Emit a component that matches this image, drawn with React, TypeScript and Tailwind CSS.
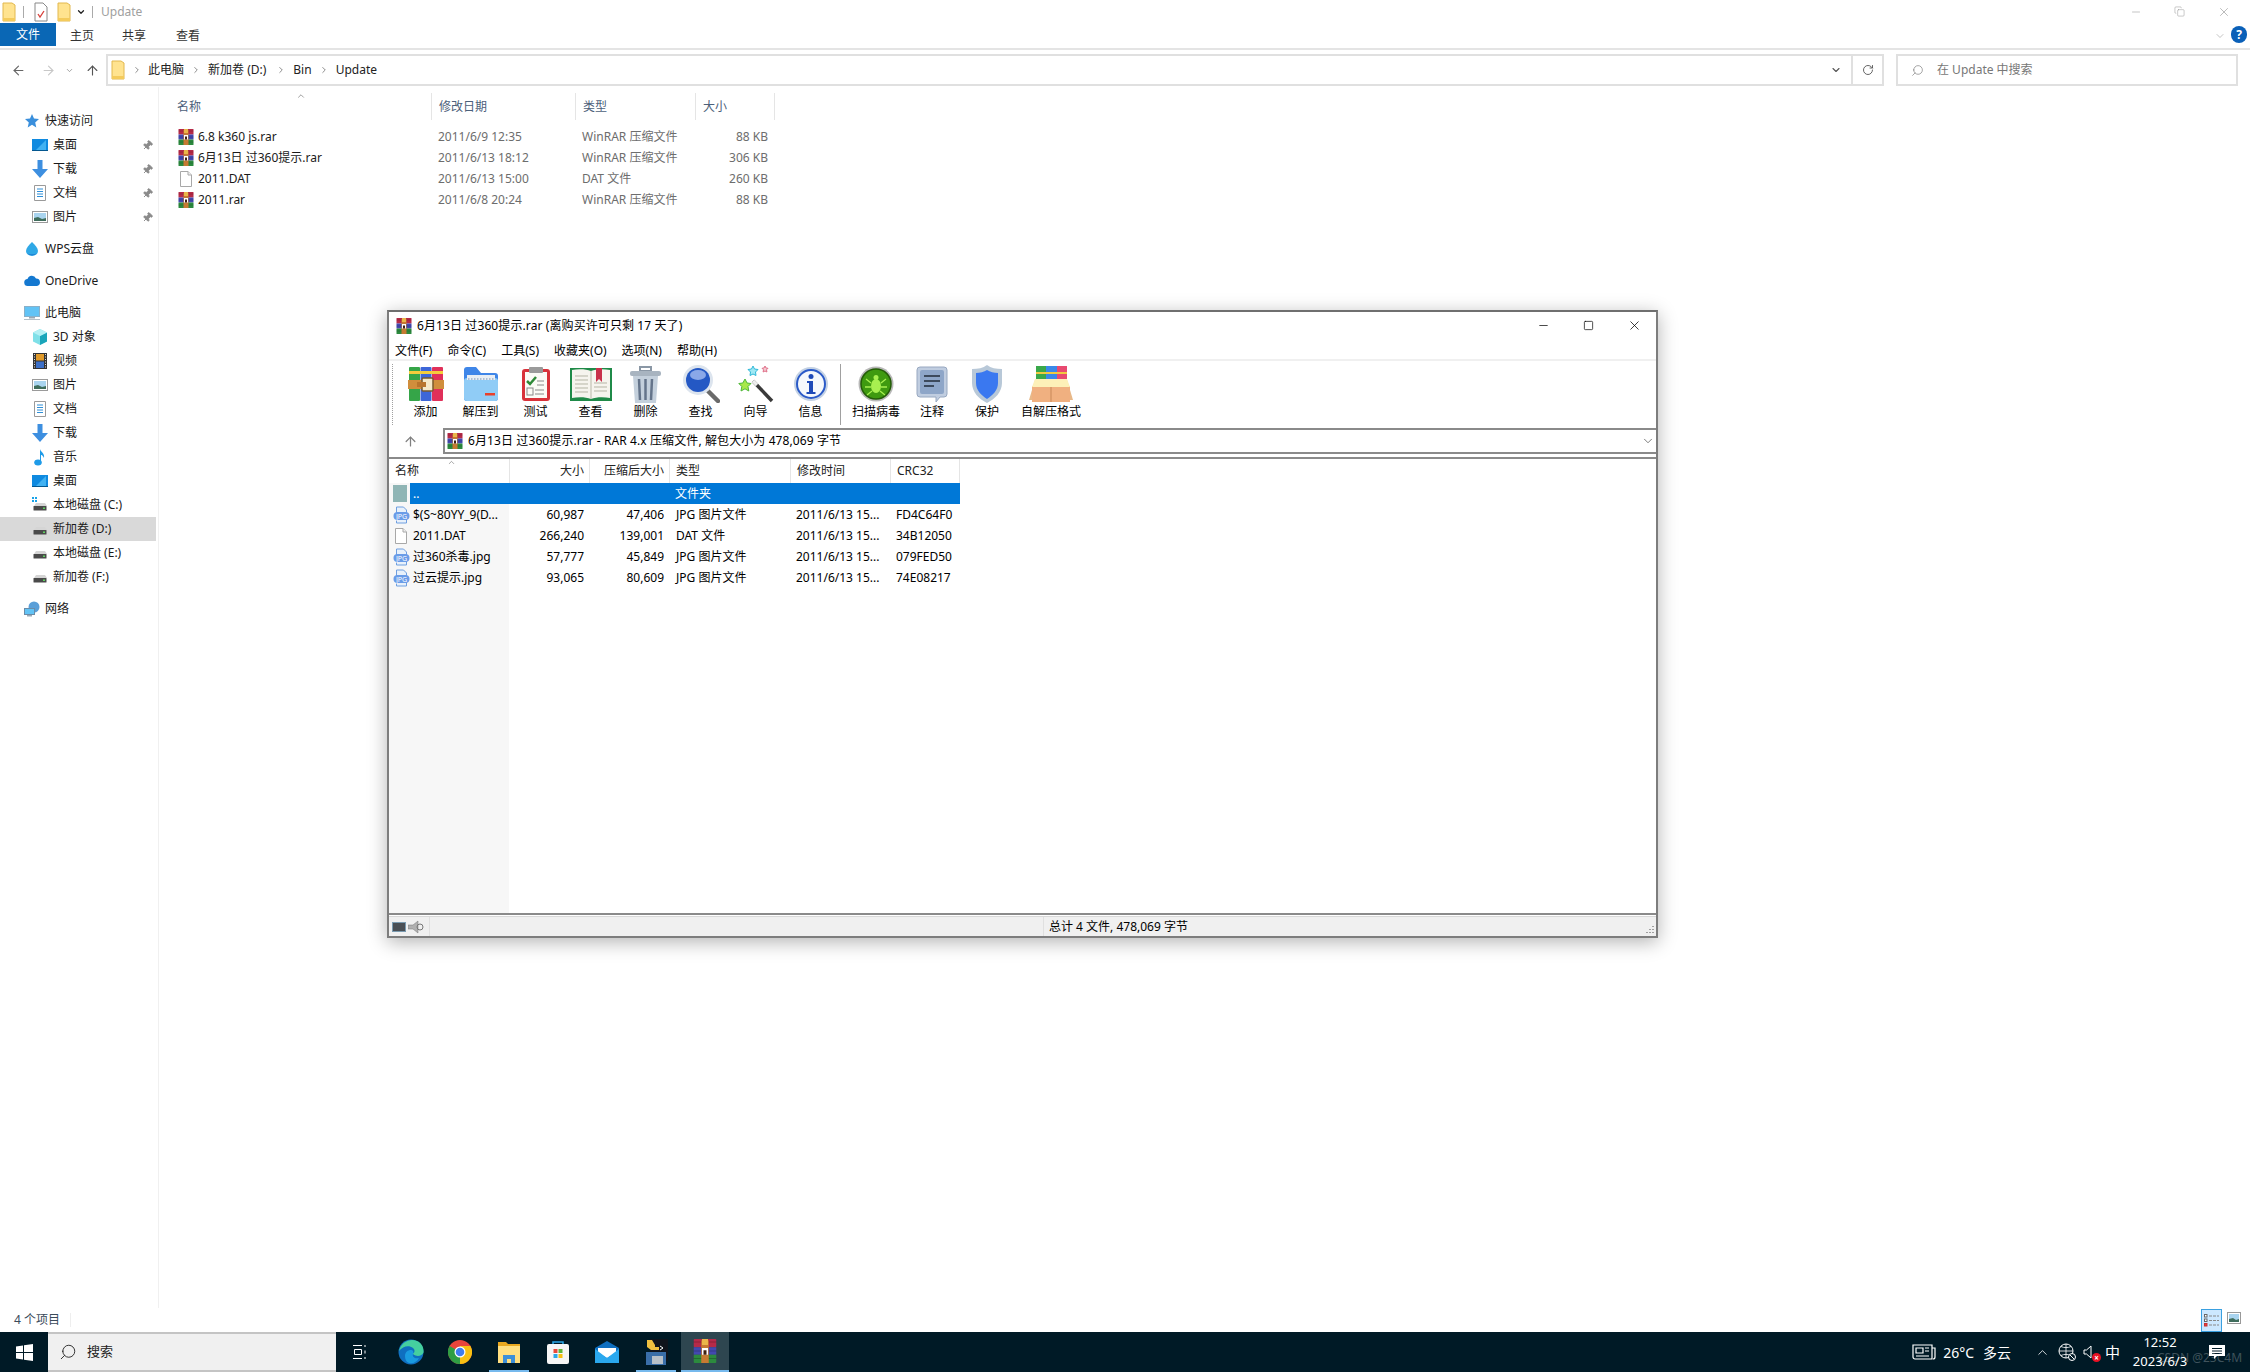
import { ArrowUp, ArrowLeft, ArrowRight, ChevronDown, ChevronUp, ChevronRight, RotateCw, Search, Minus, Square, X, Copy, Pin } from 'lucide-react'

const font = { fontFamily: '"Noto Sans", "Noto Sans CJK SC", sans-serif' }

function RarIcon({ size = 16 }: { size?: number }) {
  return (
    <svg width={size} height={size} viewBox="0 0 16 16" className="shrink-0">
      <rect x="0.500" y="0" width="15" height="5.500" rx="0.500" fill="#b52a48" />
      <rect x="0.500" y="5.500" width="15" height="5" fill="#4348b0" />
      <rect x="0.500" y="10.500" width="15" height="5.500" rx="0.500" fill="#2c8a3e" />
      <path d="M0.500 2h15M0.500 8h15M0.500 13h15" stroke="#000" strokeOpacity="0.25" strokeWidth="0.600" />
      <rect x="5.500" y="1" width="5" height="15" fill="#c67a32" />
      <rect x="6" y="0" width="4" height="4" fill="#eab64a" />
      <rect x="6" y="6" width="4" height="4.500" fill="#fff" />
      <rect x="7" y="7.500" width="2" height="3" fill="#402010" />
    </svg>
  )
}

function FileIcon() {
  return (
    <svg width="16" height="16" viewBox="0 0 16 16" className="shrink-0">
      <path d="M2.500.5h7.500l3.500 3.500v11.500h-11z" fill="#fff" stroke="#a8a8a8" />
      <path d="M10 .5v3.500h3.500" fill="#f0f0f0" stroke="#a8a8a8" />
    </svg>
  )
}

function JpgIcon() {
  return (
    <svg width="17" height="18" viewBox="0 0 17 18" className="shrink-0">
      <path d="M3.500 1h7l3 3v13h-10z" fill="#e8f1fb" stroke="#6f9fe0" />
      <rect x="0.500" y="6" width="16" height="8" rx="4" fill="#6a9ce8" />
      <text x="8.500" y="12.500" textAnchor="middle" fontSize="7" fill="#fff" style={font}>JPG</text>
    </svg>
  )
}

function FolderIcon({ className = '' }: { className?: string }) {
  return (
    <svg width="14" height="20" viewBox="0 0 14 20" className={className}>
      <path d="M1 1h9l3 2v16H1z" fill="#ffe38f" stroke="#e2b84e" />
      <rect x="1" y="16" width="12" height="3" fill="#f4cb5c" />
    </svg>
  )
}

function DriveIcon({ win = false }: { win?: boolean }) {
  return (
    <svg width="16" height="16" viewBox="0 0 16 16">
      {win && (
        <g fill="#19a3e8">
          <rect x="0" y="0" width="2" height="2" />
          <rect x="3" y="0" width="2" height="2" />
          <rect x="0" y="3" width="2" height="2" />
          <rect x="3" y="3" width="2" height="2" />
        </g>
      )}
      <path d="M2 9 4 6h9l2 3z" fill="#d5d5d5" />
      <rect x="1.500" y="9" width="13" height="4.500" rx="0.500" fill="#4a4a4a" />
      <rect x="11" y="10.500" width="2" height="1.500" fill="#5fd35f" />
    </svg>
  )
}

function NavIcon({ kind }: { kind: string }) {
  switch (kind) {
    case 'star':
      return (
        <svg width="16" height="16" viewBox="0 0 16 16">
          <path d="M8 1l2 4.600 5 .5-3.800 3.300 1.100 5L8 11.800l-4.300 2.600 1.100-5L1 6.100l5-.5z" fill="#3a8fdc" />
        </svg>
      )
    case 'desktop':
      return (
        <svg width="16" height="16" viewBox="0 0 16 16">
          <rect x="0" y="2" width="16" height="12" fill="#0f8ae0" />
          <path d="M14 3 4 13h10z" fill="#42b2f2" />
          <rect x="0" y="13" width="16" height="1" fill="#04578f" />
        </svg>
      )
    case 'download':
      return (
        <svg width="16" height="18" viewBox="0 0 16 18">
          <path d="M5.500 0h5v9H16l-8 9-8-9h5.500z" fill="#3d8fe0" />
        </svg>
      )
    case 'doc':
      return (
        <svg width="16" height="16" viewBox="0 0 16 16">
          <path d="M2.500.5h11v15h-11z" fill="#fff" stroke="#9a9a9a" />
          <path d="M5 4h6M5 6.500h6M5 9h6M5 11.500h6" stroke="#2f8fd8" />
        </svg>
      )
    case 'picture':
      return (
        <svg width="16" height="16" viewBox="0 0 16 16">
          <rect x="0.500" y="2.500" width="15" height="11" fill="#fff" stroke="#9a9a9a" />
          <rect x="2" y="4" width="12" height="8" fill="#a9d4ef" />
          <path d="M2 12V9l4-1 4 2 4-1v3z" fill="#3f6d5c" />
        </svg>
      )
    case 'wps':
      return (
        <svg width="16" height="16" viewBox="0 0 16 16">
          <path d="M8 1c3 3 6 6 6 9a6 5 0 0 1-12 0c0-3 3-6 6-9z" fill="#2fa8e6" />
          <path d="M3 12c3 2 7 2 10 0a6 5 0 0 1-10 0z" fill="#1668c8" />
        </svg>
      )
    case 'cloud':
      return (
        <svg width="16" height="16" viewBox="0 0 16 16">
          <path d="M4 13a3.500 3.500 0 0 1-.5-7A4.500 4.500 0 0 1 12 5.500a3.800 3.800 0 0 1 1 7.500z" fill="#1478d0" />
        </svg>
      )
    case 'pc':
      return (
        <svg width="16" height="16" viewBox="0 0 16 16">
          <rect x="0.500" y="1.500" width="15" height="10" fill="#62c3f5" stroke="#8ab0c8" />
          <rect x="5" y="12" width="6" height="1.500" fill="#9aa9b5" />
          <rect x="0" y="14" width="16" height="1" fill="#b5c0c8" />
        </svg>
      )
    case '3d':
      return (
        <svg width="16" height="16" viewBox="0 0 16 16">
          <path d="M8 0l7 3.500v9L8 16l-7-3.500v-9z" fill="#7fe0e8" />
          <path d="M8 7l7-3.500v9L8 16z" fill="#1aa5ba" />
          <path d="M8 0l7 3.500L8 7 1 3.500z" fill="#b5f0f4" />
        </svg>
      )
    case 'video':
      return (
        <svg width="16" height="16" viewBox="0 0 16 16">
          <rect x="1" y="0" width="14" height="16" fill="#333" />
          <rect x="4" y="1" width="8" height="6.500" fill="#e09a2a" />
          <rect x="4" y="8.500" width="8" height="6.500" fill="#3b6fc8" />
          <path d="M2.500 1v14M13.500 1v14" stroke="#ddd" strokeDasharray="1 1.500" />
        </svg>
      )
    case 'music':
      return (
        <svg width="16" height="18" viewBox="0 0 16 18">
          <ellipse cx="6" cy="14.500" rx="3.800" ry="3" fill="#1f9be8" />
          <path d="M8 14V1c.5 3 5 4 4 9-1-2.500-2.500-3-3-3v7z" fill="#1f9be8" />
        </svg>
      )
    case 'net':
      return (
        <svg width="16" height="16" viewBox="0 0 16 16">
          <circle cx="10" cy="6" r="5.500" fill="#5a9fd8" />
          <rect x="0.500" y="7.500" width="10" height="6" fill="#62c3f5" stroke="#6b8ca8" />
          <rect x="3" y="14" width="5" height="1.500" fill="#9aa9b5" />
        </svg>
      )
    case 'drive-win':
      return <DriveIcon win />
    default:
      return <DriveIcon />
  }
}

type NavItem = { label: string; icon: string; indent?: boolean; pin?: boolean; gap?: boolean; active?: boolean }

const navItems: NavItem[] = [
  { label: '快速访问', icon: 'star' },
  { label: '桌面', icon: 'desktop', indent: true, pin: true },
  { label: '下载', icon: 'download', indent: true, pin: true },
  { label: '文档', icon: 'doc', indent: true, pin: true },
  { label: '图片', icon: 'picture', indent: true, pin: true },
  { label: 'WPS云盘', icon: 'wps', gap: true },
  { label: 'OneDrive', icon: 'cloud', gap: true },
  { label: '此电脑', icon: 'pc', gap: true },
  { label: '3D 对象', icon: '3d', indent: true },
  { label: '视频', icon: 'video', indent: true },
  { label: '图片', icon: 'picture', indent: true },
  { label: '文档', icon: 'doc', indent: true },
  { label: '下载', icon: 'download', indent: true },
  { label: '音乐', icon: 'music', indent: true },
  { label: '桌面', icon: 'desktop', indent: true },
  { label: '本地磁盘 (C:)', icon: 'drive-win', indent: true },
  { label: '新加卷 (D:)', icon: 'drive', indent: true, active: true },
  { label: '本地磁盘 (E:)', icon: 'drive', indent: true },
  { label: '新加卷 (F:)', icon: 'drive', indent: true },
  { label: '网络', icon: 'net', gap: true },
]

const explorerFiles = [
  { name: '6.8 k360 js.rar', date: '2011/6/9 12:35', type: 'WinRAR 压缩文件', size: '88 KB', rar: true },
  { name: '6月13日 过360提示.rar', date: '2011/6/13 18:12', type: 'WinRAR 压缩文件', size: '306 KB', rar: true },
  { name: '2011.DAT', date: '2011/6/13 15:00', type: 'DAT 文件', size: '260 KB', rar: false },
  { name: '2011.rar', date: '2011/6/8 20:24', type: 'WinRAR 压缩文件', size: '88 KB', rar: true },
]

const archiveFiles = [
  { name: '$(S~80YY_9(D...', size: '60,987', packed: '47,406', type: 'JPG 图片文件', time: '2011/6/13 15...', crc: 'FD4C64F0', jpg: true },
  { name: '2011.DAT', size: '266,240', packed: '139,001', type: 'DAT 文件', time: '2011/6/13 15...', crc: '34B12050', jpg: false },
  { name: '过360杀毒.jpg', size: '57,777', packed: '45,849', type: 'JPG 图片文件', time: '2011/6/13 15...', crc: '079FED50', jpg: true },
  { name: '过云提示.jpg', size: '93,065', packed: '80,609', type: 'JPG 图片文件', time: '2011/6/13 15...', crc: '74E08217', jpg: true },
]

function ToolIcon({ kind }: { kind: string }) {
  switch (kind) {
    case 'add':
      return (
        <svg width="36" height="36" viewBox="0 0 36 36">
          <rect x="1" y="1" width="11" height="34" rx="1" fill="#35a548" />
          <rect x="12.500" y="1" width="11" height="34" rx="1" fill="#3d66d8" />
          <rect x="24" y="1" width="11" height="34" rx="1" fill="#e0305a" />
          <rect x="1" y="5" width="34" height="3" fill="#f4cc3c" />
          <rect x="0" y="14" width="36" height="9" fill="#d08e3c" />
          <rect x="14" y="12" width="11" height="13" rx="1" fill="#f4e8c8" stroke="#7a5a2c" strokeWidth="1.500" />
          <rect x="9" y="16" width="9" height="5" fill="#b8742c" />
        </svg>
      )
    case 'extract':
      return (
        <svg width="36" height="36" viewBox="0 0 36 36">
          <path d="M1 4a3 3 0 0 1 3-3h9l5 6h14a3 3 0 0 1 3 3v22a3 3 0 0 1-3 3H4a3 3 0 0 1-3-3z" fill="#3f86e8" />
          <rect x="1" y="12" width="34" height="23" rx="3" fill="#90ccf6" />
          <rect x="4" y="9" width="28" height="5" fill="#e8eef4" />
          <path d="M5 13h26" stroke="#9ab0c8" strokeDasharray="1.500 1.500" strokeWidth="1.500" />
          <rect x="22" y="27" width="10" height="2.500" fill="#e8402a" />
        </svg>
      )
    case 'test':
      return (
        <svg width="30" height="36" viewBox="0 0 30 36">
          <rect x="1" y="3" width="28" height="32" rx="3" fill="#d8323a" />
          <rect x="4" y="6" width="22" height="26" fill="#fbfbf6" />
          <rect x="8" y="1" width="14" height="6" rx="1" fill="#9a9a9a" />
          <path d="M6 15l3 3 6-7" stroke="#2f8a38" strokeWidth="2.500" fill="none" />
          <path d="M16 15h7M16 19h7M14 24h9M14 28h9" stroke="#8a8a8a" />
          <rect x="6" y="22" width="6" height="7" fill="none" stroke="#8a8a8a" />
        </svg>
      )
    case 'view':
      return (
        <svg width="42" height="34" viewBox="0 0 42 34">
          <path d="M0 1h42v33H0z" fill="#1f8a48" />
          <path d="M2 3c6-1 14-1 19 1 5-2 13-2 19-1v28c-6-1-14-1-19 1-5-2-13-2-19-1z" fill="#f6f4ee" />
          <path d="M21 4v28" stroke="#b8b8a8" />
          <path d="M5 9h13M5 13h13M5 17h13M5 21h13M5 25h13M24 16h13M24 20h13M24 24h13" stroke="#b5b5a5" />
          <path d="M26 1h6v14l-3-3-3 3z" fill="#c8304a" />
        </svg>
      )
    case 'delete':
      return (
        <svg width="31" height="37" viewBox="0 0 31 37">
          <rect x="10" y="1" width="11" height="4" fill="none" stroke="#8a97a5" strokeWidth="2" />
          <rect x="0" y="5" width="31" height="5" rx="2" fill="#a8b4c0" />
          <path d="M3 10h25l-2 27H5z" fill="#c4d0dc" />
          <path d="M9 13l1 21M15.500 13v21M22 13l-1 21" stroke="#64748a" strokeWidth="2.500" />
        </svg>
      )
    case 'find':
      return (
        <svg width="38" height="38" viewBox="0 0 38 38">
          <path d="M25 25l11 11" stroke="#6a6a6a" strokeWidth="4.500" strokeLinecap="round" />
          <circle cx="16" cy="15" r="15" fill="#dce4ee" />
          <circle cx="16" cy="15" r="12" fill="#2458c4" />
          <ellipse cx="16" cy="10" rx="8" ry="5" fill="#8aa8e8" />
        </svg>
      )
    case 'wizard':
      return (
        <svg width="38" height="38" viewBox="0 0 38 38">
          <path d="M16 16l19 20" stroke="#3a3a3a" strokeWidth="3.500" />
          <path d="M16 16l4 4" stroke="#eee" strokeWidth="3.500" />
          <path d="M8 14l2 4 4 .5-3 3 .8 4.500-3.800-2.200-4 2.200.8-4.500-3-3 4-.5z" fill="#a8e84a" stroke="#4fb83a" />
          <path d="M16 1l1.500 3 3.500.5-2.500 2.500.5 3.500-3-1.500-3 1.500.5-3.500-2.500-2.500 3.500-.5z" fill="#9fe8f4" stroke="#2fb8d8" />
          <path d="M28 1l1 2 2 .3-1.500 1.500.4 2.200-1.900-1-1.900 1 .4-2.200L25 3.300l2-.3z" fill="#f4c8d0" stroke="#e0708a" />
        </svg>
      )
    case 'info':
      return (
        <svg width="36" height="36" viewBox="0 0 36 36">
          <circle cx="18" cy="18" r="17" fill="#c4d2e4" />
          <circle cx="18" cy="18" r="14" fill="#f4f8fc" stroke="#2a5ac8" strokeWidth="2" />
          <circle cx="18" cy="10.500" r="2.500" fill="#1d4ab8" />
          <path d="M14 15h6v11h2.500v2h-9v-2H16v-9h-2z" fill="#1d4ab8" />
        </svg>
      )
    case 'scan':
      return (
        <svg width="36" height="36" viewBox="0 0 36 36">
          <circle cx="18" cy="18" r="17.500" fill="#b8b8b8" />
          <circle cx="18" cy="18" r="15" fill="#3f9a10" stroke="#245c08" strokeWidth="1.500" />
          <ellipse cx="18" cy="20" rx="5" ry="7" fill="#a8f050" />
          <circle cx="18" cy="11.500" r="2.500" fill="#a8f050" />
          <path d="M8 13l5 4M28 13l-5 4M7 21h6M29 21h-6M9 29l5-4M27 29l-5-4" stroke="#a8f050" strokeWidth="1.300" />
        </svg>
      )
    case 'comment':
      return (
        <svg width="32" height="36" viewBox="0 0 32 36">
          <path d="M4 1h24a3 3 0 0 1 3 3v24a3 3 0 0 1-3 3h-4l-4 5v-5H4a3 3 0 0 1-3-3V4a3 3 0 0 1 3-3z" fill="#c0cde0" stroke="#98a8c0" />
          <rect x="4" y="4" width="24" height="24" rx="2" fill="#8ea6c8" />
          <path d="M8 10h16M8 15h16M8 20h10" stroke="#3d4a5c" strokeWidth="2" />
        </svg>
      )
    case 'protect':
      return (
        <svg width="30" height="38" viewBox="0 0 30 38">
          <path d="M15 0c4 3 9 4 15 4v14c0 9-7 16-15 20C7 34 0 27 0 18V4c6 0 11-1 15-4z" fill="#b8c8d8" />
          <path d="M15 5c3 2 7 3 11 3v10c0 7-5 12-11 16C9 30 4 25 4 18V8c4 0 8-1 11-3z" fill="#3a78f0" />
        </svg>
      )
    default:
      return (
        <svg width="44" height="36" viewBox="0 0 44 36">
          <rect x="7" y="0" width="10" height="20" fill="#3aa84a" />
          <rect x="17" y="0" width="11" height="20" fill="#3a88e8" />
          <rect x="28" y="0" width="10" height="20" fill="#e84a70" />
          <rect x="7" y="6" width="31" height="2" fill="#f0c840" />
          <path d="M6 14h32l6 20H0z" fill="#e8b888" />
          <rect x="3" y="20" width="38" height="16" fill="#f0b080" />
          <path d="M22 20v16" stroke="#c88858" />
          <path d="M6 13h32l3 8H3z" fill="#fdf0b8" />
        </svg>
      )
  }
}

const tools = [
  { label: '添加', icon: 'add' },
  { label: '解压到', icon: 'extract' },
  { label: '测试', icon: 'test' },
  { label: '查看', icon: 'view' },
  { label: '删除', icon: 'delete' },
  { label: '查找', icon: 'find' },
  { label: '向导', icon: 'wizard' },
  { label: '信息', icon: 'info' },
]

const tools2 = [
  { label: '扫描病毒', icon: 'scan', w: 'w-[60px]' },
  { label: '注释', icon: 'comment', w: 'w-[52px]' },
  { label: '保护', icon: 'protect', w: 'w-[58px]' },
  { label: '自解压格式', icon: 'sfx', w: 'w-[70px]' },
]

function ToolButton({ label, icon, w = 'w-[55px]' }: { label: string; icon: string; w?: string }) {
  return (
    <div className={`${w} flex flex-col items-center shrink-0`}>
      <div className="h-[40px] flex items-center justify-center">
        <ToolIcon kind={icon} />
      </div>
      <span className="text-[12px] leading-[16px] text-black whitespace-nowrap">{label}</span>
    </div>
  )
}

function WinRarWindow() {
  return (
    <div className="absolute left-[387px] top-[310px] w-[1271px] h-[628px] flex flex-col bg-white border-2 border-[#7d7d7d] border-t-[#6f6f6f] shadow-[0_4px_18px_rgba(0,0,0,0.3)] text-[12px] text-black">
      <div className="h-[27px] flex items-center pl-[7px] shrink-0">
        <RarIcon />
        <span className="ml-[5px] tracking-[0.1px]">6月13日 过360提示.rar (离购买许可只剩 17 天了)</span>
        <div className="ml-auto flex items-center gap-[33px] pr-[14px]">
          <Minus size={13} strokeWidth={1.3} />
          <Square size={11} strokeWidth={1.5} />
          <X size={15} strokeWidth={1.2} />
        </div>
      </div>
      <div className="h-[20px] pt-[3px] flex items-center shrink-0 pl-[6px] gap-[15px]">
        {['文件(F)', '命令(C)', '工具(S)', '收藏夹(O)', '选项(N)', '帮助(H)'].map((m) => (
          <span key={m} className="whitespace-nowrap">{m}</span>
        ))}
      </div>
      <div className="h-[69px] flex border-t-[2px] border-[#f0f0f0] shrink-0">
        <div className="ml-[3px] my-[3px] border-l border-dotted border-[#a0a0a0]" />
        <div className="ml-[5px] flex pt-[3px]">
          {tools.map((t) => (
            <ToolButton key={t.label} label={t.label} icon={t.icon} />
          ))}
        </div>
        <div className="ml-[2px] my-[3px] w-px bg-[#a0a0a0]" />
        <div className="ml-[5px] flex pt-[3px]">
          {tools2.map((t) => (
            <ToolButton key={t.label} label={t.label} icon={t.icon} w={t.w} />
          ))}
        </div>
      </div>
      <div className="h-[27px] flex shrink-0">
        <div className="w-[54px] flex items-center justify-center pr-[12px] pb-[1px]">
          <ArrowUp size={15} strokeWidth={2} className="text-[#808080]" />
        </div>
        <div className="flex-1 h-[26px] flex items-center border-2 border-[#8a8a8a] border-r-0 pl-[2px]">
          <RarIcon />
          <span className="ml-[5px] tracking-[0.1px]">6月13日 过360提示.rar - RAR 4.x 压缩文件, 解包大小为 478,069 字节</span>
          <ChevronDown size={14} strokeWidth={1.3} className="ml-auto mr-[1px] text-[#555]" />
        </div>
      </div>
      <div className="flex-1 mt-[2px] border-t-2 border-b-2 border-[#8a8a8a] flex flex-col min-h-0 bg-[linear-gradient(90deg,#f7f7f7_120px,#ffffff_120px)]">
        <div className="h-[24px] shrink-0 bg-white grid grid-cols-[120px_80px_80px_121px_100px_70px] w-[571px] items-center text-[#222] relative">
          <span className="pl-[6px]">名称</span>
          <span className="h-full flex items-center justify-end pr-[5px] border-l border-[#e5e5e5]">大小</span>
          <span className="h-full flex items-center justify-end pr-[5px] border-l border-[#e5e5e5]">压缩后大小</span>
          <span className="h-full flex items-center pl-[6px] border-l border-[#e5e5e5]">类型</span>
          <span className="h-full flex items-center pl-[6px] border-l border-[#e5e5e5]">修改时间</span>
          <span className="h-full flex items-center pl-[6px] border-x border-[#e5e5e5]">CRC32</span>
          <ChevronUp size={9} strokeWidth={1.5} className="absolute left-[58px] -top-[1px] text-[#666]" />
        </div>
        <div className="w-[571px] h-[21px] flex items-center">
          <div className="w-[21px] pl-[4px] shrink-0">
            <div className="w-[14px] h-[17px] bg-[#8fb5b5]" />
          </div>
          <div className="flex-1 h-full bg-[#0078d7] text-white grid grid-cols-[99px_80px_80px_121px_100px_70px] items-center">
            <span className="pl-[3px]">..</span>
            <span />
            <span />
            <span className="pl-[6px]">文件夹</span>
          </div>
        </div>
        {archiveFiles.map((f) => (
          <div key={f.crc} className="w-[571px] h-[21px] flex items-center">
            <div className="w-[21px] pl-[4px] shrink-0 flex">
              {f.jpg ? <JpgIcon /> : <FileIcon />}
            </div>
            <div className="flex-1 grid grid-cols-[99px_80px_80px_121px_100px_70px] items-center whitespace-nowrap">
              <span className="pl-[3px] overflow-visible">{f.name}</span>
              <span className="text-right pr-[5px]">{f.size}</span>
              <span className="text-right pr-[5px]">{f.packed}</span>
              <span className="pl-[7px]">{f.type}</span>
              <span className="pl-[6px]">{f.time}</span>
              <span className="pl-[6px]">{f.crc}</span>
            </div>
          </div>
        ))}
      </div>
      <div className="h-[20px] shrink-0 mt-[1px] border-t border-[#d8d8d8] bg-[#f0f0f0] flex items-center relative">
        <div className="w-[41px] h-full flex items-center gap-[2px] pl-[3px] border-r border-[#e0e0e0]">
          <svg width="14" height="10" viewBox="0 0 14 10">
            <rect x="0.500" y="0.500" width="13" height="9" fill="#4a4f55" stroke="#7a9ab0" />
          </svg>
          <svg width="16" height="14" viewBox="0 0 16 14">
            <path d="M0 5h5l5-4v12l-5-4H0z" fill="#b0b0b0" stroke="#777" strokeWidth="0.500" />
            <circle cx="12" cy="7" r="3" fill="none" stroke="#777" />
          </svg>
        </div>
        <div className="ml-[613px] h-full flex items-center pl-[5px] border-l border-[#e0e0e0]">总计 4 文件, 478,069 字节</div>
        <svg width="10" height="10" viewBox="0 0 10 10" className="absolute right-[1px] bottom-[1px]">
          <path d="M8 1v1M5 4v1M8 4v1M2 7v1M5 7v1M8 7v1" stroke="#a0a0a0" strokeWidth="2" />
        </svg>
      </div>
    </div>
  )
}

function TaskIcon({ kind }: { kind: string }) {
  switch (kind) {
    case 'edge':
      return (
        <svg width="26" height="26" viewBox="0 0 26 26">
          <circle cx="13" cy="13" r="12.500" fill="#0f6fc0" />
          <path d="M1 12C3 3 12-1 19 2c5 2 7 7 6.500 11.500-1 3-5 4-8 3-2-.5-3-2-2.500-2 2-1 2-4 0-5.500C11 6 5 7 1 12z" fill="#45cf9f" />
          <path d="M7 17c0-4 3-6 6-6 2 0 3 2 2 4-1 3 2 5 6 4-2 4-6 6-10 5-3-1-4-4-4-7z" fill="#1a9be0" />
        </svg>
      )
    case 'chrome':
      return (
        <svg width="24" height="24" viewBox="0 0 24 24">
          <circle cx="12" cy="12" r="12" fill="#e8453c" />
          <path d="M12 24A12 12 0 0 1 1.600 6L12 12z" fill="#2f9e44" />
          <path d="M12 24a12 12 0 0 0 10.400-18H12z" fill="#f8c012" />
          <circle cx="12" cy="12" r="5.500" fill="#fff" />
          <circle cx="12" cy="12" r="4.300" fill="#3f7df0" />
        </svg>
      )
    case 'files':
      return (
        <svg width="22" height="22" viewBox="0 0 22 22">
          <path d="M0 1h8l2 2h12v19H0z" fill="#e8a820" />
          <rect x="0" y="5" width="22" height="17" fill="#ffdf80" />
          <rect x="5" y="14" width="12" height="8" fill="#3c8fd8" />
          <rect x="9" y="18" width="4" height="4" fill="#ffdf80" />
        </svg>
      )
    case 'store':
      return (
        <svg width="24" height="24" viewBox="0 0 24 24">
          <path d="M7 6V2h10v4" fill="none" stroke="#2aa7e8" strokeWidth="1.500" />
          <rect x="1" y="4" width="22" height="20" rx="2" fill="#f6f6f6" />
          <rect x="7.500" y="9" width="4" height="4" fill="#e8493a" />
          <rect x="12.500" y="9" width="4" height="4" fill="#5fb83a" />
          <rect x="7.500" y="14" width="4" height="4" fill="#2aa7e8" />
          <rect x="12.500" y="14" width="4" height="4" fill="#f8c012" />
        </svg>
      )
    case 'mail':
      return (
        <svg width="24" height="22" viewBox="0 0 24 22">
          <path d="M0 7 12 0l12 7v15H0z" fill="#0f6fc0" />
          <path d="M3 7h18v5l-9 5-9-5z" fill="#ffffff" />
          <path d="M0 8l12 9 12-9v14H0z" fill="#2aa8ee" />
        </svg>
      )
    case 'app':
      return (
        <svg width="24" height="26" viewBox="0 0 24 26">
          <rect x="6" y="0" width="18" height="22" fill="#10141c" />
          <rect x="2" y="13" width="20" height="13" fill="#3a6ea8" />
          <rect x="8" y="17" width="11" height="8" fill="#b8c0c8" />
          <path d="M3 1h5l3 5v2h4v3H7L3 8z" fill="#f0c040" />
          <path d="M16 7l3 2-3 2" stroke="#fff" fill="none" />
        </svg>
      )
    default:
      return <RarIcon size={24} />
  }
}

const taskIcons = [
  { kind: 'edge', running: false },
  { kind: 'chrome', running: false },
  { kind: 'files', running: true },
  { kind: 'store', running: false },
  { kind: 'mail', running: false },
  { kind: 'app', running: true },
]

export default function App() {
  return (
    <div style={font} className="relative w-[2250px] h-[1372px] overflow-hidden bg-white flex flex-col text-[12px] text-[#1a1a1a]">
      {/* Explorer title bar */}
      <div className="h-[23px] flex items-center shrink-0 pl-[2px]">
        <FolderIcon />
        <div className="ml-[7px] w-px h-[12px] bg-[#aaa]" />
        <svg width="14" height="20" viewBox="0 0 14 20" className="ml-[10px]">
          <path d="M1 1h8l4 4v14H1z" fill="#fff" stroke="#888" />
          <path d="M4 12l2 3 4-6" stroke="#d8403a" strokeWidth="1.300" fill="none" />
        </svg>
        <FolderIcon className="ml-[9px]" />
        <ChevronDown size={10} strokeWidth={3} className="ml-[5px] text-[#222]" />
        <div className="ml-[6px] w-px h-[12px] bg-[#aaa]" />
        <span className="ml-[8px] text-[#a0a0a0]">Update</span>
        <div className="ml-auto flex items-center gap-[32px] pr-[19px] text-[#8a8a8a]">
          <Minus size={12} strokeWidth={1} />
          <Copy size={11} strokeWidth={1} />
          <X size={14} strokeWidth={1} />
        </div>
      </div>
      {/* Ribbon tabs */}
      <div className="h-[27px] flex border-b-2 border-[#e4e4e4] shrink-0">
        <div className="w-[56px] h-[23px] bg-[#0a67b5] text-white flex items-center justify-center">文件</div>
        <div className="ml-[14px] h-[23px] pt-[2px] flex items-center gap-[28px] text-[#333]">
          <span>主页</span>
          <span>共享</span>
          <span className="ml-[2px]">查看</span>
        </div>
        <div className="ml-auto flex items-start gap-[5px] pr-[3px]">
          <ChevronDown size={12} strokeWidth={1} className="mt-[7px] text-[#888]" />
          <div className="mt-[3px] w-[16px] h-[17px] rounded-full bg-[#0a60b8] text-white text-[12px] font-bold flex items-center justify-center">?</div>
        </div>
      </div>
      {/* Address row */}
      <div className="h-[37px] pt-[3px] flex items-center shrink-0 text-[#444]">
        <ArrowLeft size={15} strokeWidth={1.8} className="ml-[11px] text-[#666]" />
        <ArrowRight size={15} strokeWidth={1.8} className="ml-[15px] text-[#c8c8c8]" />
        <ChevronDown size={9} strokeWidth={2} className="ml-[9px] text-[#888]" />
        <ArrowUp size={15} strokeWidth={1.8} className="ml-[11px] text-[#555]" />
        <div className="ml-[6px] w-[1778px] h-[32px] flex items-center border-2 border-[#e0e0e0]">
          <FolderIcon className="ml-[3px]" />
          <ChevronRight size={10} className="ml-[7px] text-[#777]" />
          <span className="ml-[6px] text-[#222]">此电脑</span>
          <ChevronRight size={10} className="ml-[7px] text-[#777]" />
          <span className="ml-[7px] text-[#222]">新加卷 (D:)</span>
          <ChevronRight size={10} className="ml-[10px] text-[#777]" />
          <span className="ml-[7px] text-[#222]">Bin</span>
          <ChevronRight size={10} className="ml-[7px] text-[#777]" />
          <span className="ml-[7px] text-[#222]">Update</span>
          <ChevronDown size={12} strokeWidth={2.2} className="ml-auto mr-[9px] text-[#555]" />
          <div className="w-[31px] h-full flex items-center justify-center border-l-2 border-[#e0e0e0]">
            <RotateCw size={12} strokeWidth={1.8} className="text-[#555]" />
          </div>
        </div>
        <div className="ml-[12px] w-[342px] h-[32px] flex items-center border-2 border-[#e0e0e0] text-[#777]">
          <Search size={13} strokeWidth={1.2} className="ml-[13px] -scale-x-100" />
          <span className="ml-[13px]">在 Update 中搜索</span>
        </div>
      </div>
      {/* Explorer body */}
      <div className="flex-1 flex min-h-0">
        <div className="w-[159px] border-r border-[#f0f0f0] pt-[22px] shrink-0">
          {navItems.map((n, i) => (
            <div
              key={i}
              className={`h-[24px] w-[156px] flex items-center ${n.gap ? 'mt-[8px]' : ''} ${n.indent ? 'pl-[32px]' : 'pl-[24px]'} ${n.active ? 'bg-[#d9d9d9]' : ''}`}
            >
              <div className="w-[16px] h-[18px] flex items-center justify-center shrink-0">
                <NavIcon kind={n.icon} />
              </div>
              <span className="ml-[5px] whitespace-nowrap">{n.label}</span>
              {n.pin && <Pin size={11} className="ml-auto mr-[3px] text-[#8a8a8a] rotate-45" fill="#8a8a8a" />}
            </div>
          ))}
        </div>
        <div className="flex-1 relative">
          <div className="mt-[6px] h-[27px] w-[616px] grid grid-cols-[272px_144px_120px_80px] text-[#4c607a] relative">
            <span className="pl-[18px] flex items-center">名称</span>
            <span className="pl-[7px] flex items-center border-l border-[#e5e5e5]">修改日期</span>
            <span className="pl-[7px] flex items-center border-l border-[#e5e5e5]">类型</span>
            <span className="pl-[7px] flex items-center border-x border-[#e5e5e5]">大小</span>
            <ChevronUp size={10} strokeWidth={1.5} className="absolute left-[137px] -top-[2px] text-[#666]" />
          </div>
          <div className="mt-[6px]">
            {explorerFiles.map((f) => (
              <div key={f.name} className="h-[21px] w-[616px] grid grid-cols-[272px_144px_120px_80px] items-center whitespace-nowrap">
                <div className="flex items-center pl-[19px]">
                  {f.rar ? <RarIcon /> : <FileIcon />}
                  <span className="ml-[4px] text-[#1a1a1a]">{f.name}</span>
                </div>
                <span className="pl-[7px] text-[#6d6d6d]">{f.date}</span>
                <span className="pl-[7px] text-[#6d6d6d]">{f.type}</span>
                <span className="pr-[7px] text-right text-[#6d6d6d]">{f.size}</span>
              </div>
            ))}
          </div>
        </div>
      </div>
      {/* Status bar */}
      <div className="h-[24px] flex items-center shrink-0 pl-[14px] text-[#3a4a5a]">
        <span>4 个项目</span>
        <div className="ml-[10px] w-px h-[14px] bg-[#eee]" />
        <div className="ml-auto flex items-center gap-[5px] pr-[9px] self-end">
          <div className="w-[21px] h-[23px] bg-[#cce8ff] border border-[#3aa0e0] flex items-center justify-center">
            <svg width="15" height="13" viewBox="0 0 15 13">
              <path d="M5 2h10M5 6.500h10M5 11h10" stroke="#888" strokeDasharray="3 1" />
              <rect x="0.500" y="0.500" width="2.500" height="2.500" fill="#fff" stroke="#666" />
              <rect x="0.500" y="5" width="2.500" height="2.500" fill="#fff" stroke="#666" />
              <rect x="0.500" y="9.500" width="2.500" height="2.500" fill="#e8403a" stroke="#c83030" />
            </svg>
          </div>
          <svg width="14" height="12" viewBox="0 0 14 12" className="mb-[6px]">
            <rect x="0.500" y="0.500" width="13" height="11" fill="#fff" stroke="#999" />
            <rect x="2" y="2" width="10" height="8" fill="#a9d4ef" />
            <path d="M2 10V7l4-1 3 2 3-1v3z" fill="#3f6d5c" />
          </svg>
        </div>
      </div>
      {/* Taskbar */}
      <div className="h-[40px] bg-[#001a26] flex items-center shrink-0 text-white relative">
        <div className="w-[48px] flex justify-center">
          <svg width="17" height="17" viewBox="0 0 17 17" fill="#fff">
            <path d="M0 2.400 7 1.400V8H0zM8 1.300 17 0v8H8zM0 9h7v6.600l-7-1zM8 9h9v8l-9-1.300z" />
          </svg>
        </div>
        <div className="w-[288px] h-full bg-[#f0f0f0] border-y-2 border-[#c4c4c4] flex items-center text-[#222] text-[13px]">
          <Search size={18} strokeWidth={1.2} className="ml-[11px] -scale-x-100" />
          <span className="ml-[10px]">搜索</span>
        </div>
        <div className="w-[48px] flex justify-center">
          <svg width="16" height="16" viewBox="0 0 16 16" fill="none" stroke="#fff">
            <path d="M1 1.500h9M1 14.500h9M2.500 5.500h7v5h-7zM13 1v2M13 6.500v3M13 13v2" />
          </svg>
        </div>
        {/* pinned apps */}
        <div className="ml-[2px] flex h-full">
          {taskIcons.map((t) => (
            <div key={t.kind} className="w-[49px] h-full flex items-center justify-center relative">
              <TaskIcon kind={t.kind} />
              {t.running && <div className="absolute bottom-0 left-[5px] right-[4px] h-[2px] bg-[#76b9ed]" />}
            </div>
          ))}
          <div className="ml-[1px] w-[48px] h-full bg-[#2e4650] flex items-center justify-center border-b-2 border-[#76b9ed]">
            <RarIcon size={24} />
          </div>
        </div>
        {/* tray */}
        <div className="ml-auto flex items-center h-full">
          <svg width="24" height="18" viewBox="0 0 24 18" fill="none" stroke="#fff" strokeWidth="1.200">
            <path d="M1 2h19v14H3a2 2 0 0 1-2-2zM20 5h3v9a2 2 0 0 1-2 2M4 5h7v5H4zM13 5h4M13 8h4M4 13h13" />
          </svg>
          <span className="ml-[7px] text-[14px] whitespace-nowrap">26°C</span>
          <span className="ml-[9px] text-[14px]">多云</span>
          <ChevronUp size={15} strokeWidth={1.3} className="ml-[24px]" />
          <svg width="18" height="18" viewBox="0 0 18 18" fill="none" stroke="#fff" className="ml-[8px]">
            <circle cx="8" cy="8" r="7" />
            <path d="M1 8h14M8 1v14M3 3.500c3 1.500 7 1.500 10 0M3 12.500c3-1.500 7-1.500 10 0" strokeWidth="0.800" />
            <circle cx="14" cy="14" r="3.500" fill="#001a26" />
            <path d="M12 12l4 4" />
          </svg>
          <div className="ml-[7px] relative w-[16px] h-[16px]">
            <svg width="10" height="14" viewBox="0 0 10 14" fill="none" stroke="#fff" className="mt-[1px]">
              <path d="M1 5h2.500L8 1v12L3.500 9H1z" />
            </svg>
            <div className="absolute right-[-2px] bottom-[-2px] w-[9px] h-[9px] rounded-full bg-[#e81123] text-white text-[8px] leading-[9px] font-bold flex items-center justify-center">×</div>
          </div>
          <span className="ml-[6px] text-[15px]">中</span>
          <div className="ml-[5px] w-[70px] text-[13px] leading-[19px] text-center whitespace-nowrap">
            <div>12:52</div>
            <div>2023/6/3</div>
          </div>
          <svg width="16" height="14" viewBox="0 0 16 14" fill="#fff" className="ml-[14px] mr-[25px]">
            <path d="M0 0h16v11H8l-3 3v-3H0z" />
            <path d="M3 3.500h10M3 6h10M3 8.500h10" stroke="#001a26" />
          </svg>
        </div>
        {/* CSDN watermark */}
        <span className="absolute left-[2157px] top-[17px] text-[12px] text-white/25 whitespace-nowrap">CSDN @23C4M</span>
      </div>
      <WinRarWindow />
    </div>
  )
}
